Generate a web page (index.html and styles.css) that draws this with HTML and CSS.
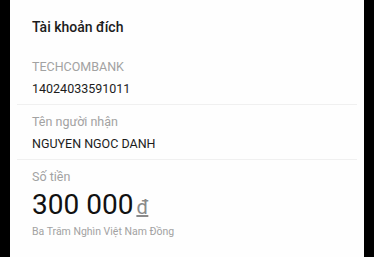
FILE: index.html
```html
<!DOCTYPE html>
<html>
<head>
    <title>Tài khoản đích</title>
    <link rel="stylesheet" href="styles.css">
</head>
<body>
<div class="sheet">
    <div class="title">Tài khoản đích</div>
    <div class="row">
        <div class="label">TECHCOMBANK</div>
        <div class="value">14024033591011</div>
    </div>
    <div class="row">
        <div class="label">Tên người nhận</div>
        <div class="value">NGUYEN NGOC DANH</div>
    </div>
    <div class="row last">
        <div class="label">Số tiền</div>
        <div class="amount">300 000<span class="currency">đ</span></div>
        <div class="words">Ba Trăm Nghìn Việt Nam Đồng</div>
    </div>
</div>
</body>
</html>
```

FILE: styles.css
```css
html, body {
margin: 0;
padding: 0;
background: #000;
}

.sheet {
margin: 0 10px;
height: 257px;
background: #fefefe;
font-family: Roboto, sans-serif;
color: #1c1c1c;
padding: 0 7px;
box-sizing: border-box;
}

.title {
padding: 17px 0 13px 15px;
font-size: 14px;
line-height: 20px;
font-weight: 500;
}

.row {
padding: 8px 0 6px 15px;
border-bottom: 1px solid #f0f0f0;
}

.row.last {
border-bottom: none;
}

.label {
font-size: 12.5px;
color: #a2a2a2;
line-height: 18px;
margin-bottom: 3px;
}

.value {
font-size: 12.5px;
line-height: 19px;
}

.amount {
font-size: 28px;
line-height: 32px;
color: #111;
}

.currency {
font-size: 20px;
color: #8a8a8a;
text-decoration: underline;
margin-left: 3px;
}

.words {
font-size: 10.5px;
color: #a2a2a2;
line-height: 16px;
margin-top: 1px;
}
```
